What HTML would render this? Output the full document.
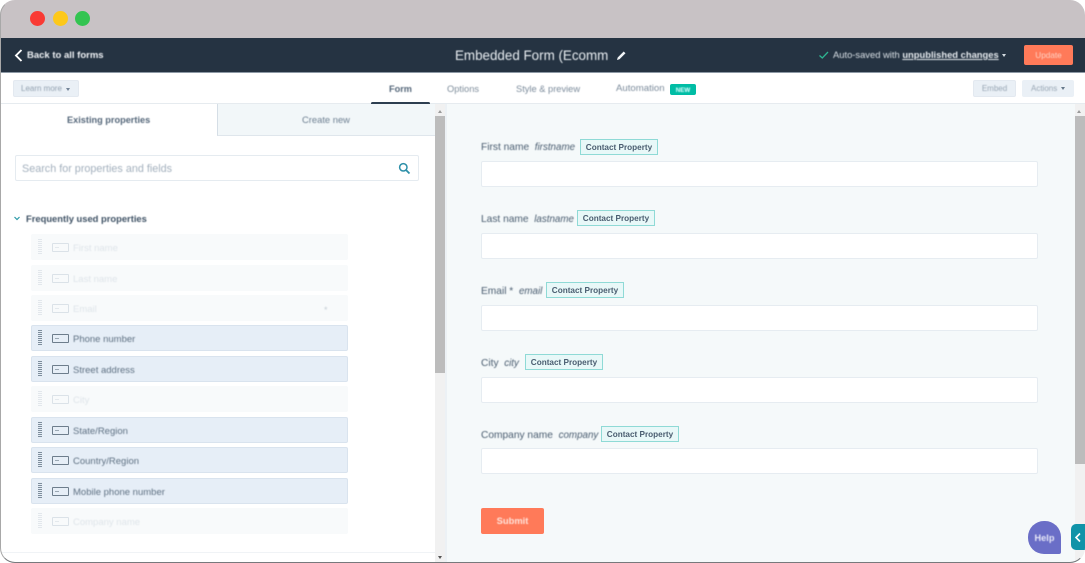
<!DOCTYPE html>
<html><head><meta charset="utf-8">
<style>
html,body{margin:0;padding:0;background:#fff}
body{width:1085px;height:563px;position:relative;overflow:hidden;font-family:"Liberation Sans",sans-serif;color:#33475b}
.a{position:absolute}
.t{position:absolute;white-space:nowrap;line-height:14px;height:14px;filter:blur(.4px)}
#win{position:absolute;left:0;top:0;width:1085px;height:563px;overflow:hidden;border-radius:15px}
.row{position:absolute;left:31px;width:317px;height:26px;background:#e6eef7;border:1px solid #d9e3ee;box-sizing:border-box;border-radius:2px}
.row.off{background:#f8fafb;border-color:#f8fafb}
.row i.g{position:absolute;left:6px;top:4px;width:4px;height:15px;background:repeating-linear-gradient(#7d8d9c 0 1px,transparent 1px 2px)}
.row.off i.g{background:repeating-linear-gradient(#e2e7ec 0 1px,transparent 1px 2px)}
.row i.b{position:absolute;left:20px;top:8px;width:15px;height:7px;border:1px solid #6d7d8c;border-radius:1px;box-sizing:content-box}
.row.off i.b{border-color:#dbe2e8}
.row i.b:after{content:"";position:absolute;left:2px;top:3px;width:4px;height:1px;background:#9aa7b3}
.row.off i.b:after{background:#e4e9ed}
.row span{position:absolute;left:41px;top:7px;font-size:9.5px;line-height:14px;color:#5e7082;white-space:nowrap;filter:blur(.4px)}
.row.off span{color:#dfe5ea}
.f{position:absolute;left:481px;width:557px;height:26px;background:#fff;border:1px solid #e6ecf1;box-sizing:border-box;border-radius:2px}
.tag{position:absolute;height:16px;background:#e8f8f8;border:1px solid #8fdad6;box-sizing:border-box;font-size:8.2px;font-weight:bold;color:#4a5d70;line-height:16px;text-align:center;white-space:nowrap}
.lb{font-size:10.2px;color:#4a5d70}
.lb em{font-style:italic;font-size:9.8px}
</style></head><body>
<div id="win">
<!-- title bar -->
<div class="a" style="left:0;top:0;width:1085px;height:38px;background:#c8c2c5"></div>
<div class="a" style="left:30px;top:11px;width:15px;height:15px;border-radius:50%;background:#f93a34"></div>
<div class="a" style="left:53px;top:11px;width:15px;height:15px;border-radius:50%;background:#fdc81a"></div>
<div class="a" style="left:75px;top:11px;width:15px;height:15px;border-radius:50%;background:#33c451"></div>
<!-- header -->
<div class="a" style="left:0;top:38px;width:1085px;height:34px;background:#253342"></div>
<div class="a" style="left:0;top:72px;width:1085px;height:1px;background:#8d99a5"></div>
<svg class="a" style="left:13px;top:48px" width="11" height="15" viewBox="0 0 11 15"><path d="M8.5 2 L3 7.5 L8.5 13" fill="none" stroke="#fff" stroke-width="1.9"/></svg>
<div class="t" style="left:27px;top:49px;font-size:9.5px;font-weight:bold;color:#f0f3f6">Back to all forms</div>
<div class="t" style="left:455px;top:49px;font-size:13.4px;color:#eaeff3">Embedded Form (Ecomm</div>
<svg class="a" style="left:616px;top:50px" width="11" height="11" viewBox="0 0 11 11"><path d="M1 10 L1.7 7.5 L7.7 1.5 L9.5 3.3 L3.5 9.3 Z" fill="#f2f5f7"/></svg>
<svg class="a" style="left:818px;top:50px" width="12" height="10" viewBox="0 0 12 10"><path d="M1.5 5.5 L4.3 8 L10 2" fill="none" stroke="#2db591" stroke-width="1.3"/></svg>
<div class="t" style="left:833px;top:48px;font-size:9.4px;color:#d9e0e6">Auto-saved with <b style="text-decoration:underline;color:#e6ebef">unpublished changes</b></div>
<div class="a" style="left:1002px;top:54px;width:0;height:0;border:2.5px solid transparent;border-top:3px solid #d5dce2"></div>
<div class="a" style="left:1024px;top:45px;width:49px;height:20px;background:#ff7a59;border-radius:2px"></div>
<div class="t" style="left:1024px;top:49px;width:49px;text-align:center;font-size:8.2px;color:#ffd2c4">Update</div>
<!-- subnav -->
<div class="a" style="left:0;top:73px;width:1085px;height:31px;background:#fff;border-bottom:1px solid #e6ebef;box-sizing:border-box"></div>
<div class="a" style="left:13px;top:80px;width:66px;height:17px;background:#eaf0f6;border:1px solid #e3e9f0;box-sizing:border-box;border-radius:2px"></div>
<div class="t" style="left:21px;top:82px;font-size:8px;color:#93a2b1">Learn more</div>
<div class="a" style="left:66px;top:88px;width:0;height:0;border:2px solid transparent;border-top:3px solid #738497"></div>
<div class="t" style="left:389px;top:82px;font-size:9.2px;font-weight:bold;color:#55677a">Form</div>
<div class="a" style="left:371px;top:102px;width:59px;height:3px;background:#2d3e50;border-radius:2px"></div>
<div class="t" style="left:447px;top:82px;font-size:9.3px;color:#7f8e9c">Options</div>
<div class="t" style="left:516px;top:82px;font-size:9.3px;color:#7b8b9b">Style &amp; preview</div>
<div class="t" style="left:616px;top:82px;font-size:9.6px;color:#7b8b9b">Automation</div>
<div class="a" style="left:670px;top:84px;width:26px;height:11px;background:#00bda5;border-radius:2px"></div>
<div class="t" style="left:670px;top:84px;width:26px;text-align:center;font-size:6.2px;font-weight:bold;color:#dff">NEW</div>
<div class="a" style="left:973px;top:80px;width:43px;height:17px;background:#eaf0f6;border:1px solid #e3e9f0;box-sizing:border-box;border-radius:2px"></div>
<div class="t" style="left:973px;top:82px;width:43px;text-align:center;font-size:8px;color:#98a6b4">Embed</div>
<div class="a" style="left:1022px;top:80px;width:52px;height:17px;background:#eaf0f6;border-radius:2px"></div>
<div class="t" style="left:1031px;top:82px;font-size:8px;color:#98a6b4">Actions</div>
<div class="a" style="left:1061px;top:87px;width:0;height:0;border:2px solid transparent;border-top:3px solid #66788a"></div>
<!-- left panel -->
<div class="a" style="left:0;top:104px;width:435px;height:459px;background:#fff"></div>
<div class="a" style="left:217px;top:104px;width:218px;height:32px;background:#f2f7f9;border-bottom:1px solid #dfe6ec;border-left:1px solid #d5dee6;box-sizing:border-box"></div>
<div class="t" style="left:67px;top:113px;font-size:9.2px;font-weight:bold;color:#55677a">Existing properties</div>
<div class="t" style="left:302px;top:113px;font-size:9.4px;color:#6d7f91">Create new</div>
<div class="a" style="left:15px;top:155px;width:404px;height:26px;background:#fff;border:1px solid #e5ebf0;box-sizing:border-box;border-radius:2px"></div>
<div class="t" style="left:22px;top:162px;font-size:10.8px;color:#a3b0bd">Search for properties and fields</div>
<svg class="a" style="left:398px;top:162px" width="13" height="13" viewBox="0 0 13 13"><circle cx="5.3" cy="5.3" r="3.7" fill="none" stroke="#2c8fa8" stroke-width="1.5"/><path d="M8 8 L11.5 11.5" stroke="#2c8fa8" stroke-width="1.8"/></svg>
<svg class="a" style="left:13px;top:215px" width="8" height="7" viewBox="0 0 8 7"><path d="M1.5 2 L4 4.5 L6.5 2" fill="none" stroke="#2c9aa8" stroke-width="1.2"/></svg>
<div class="t" style="left:26px;top:212px;font-size:9.4px;font-weight:bold;color:#3f5265">Frequently used properties</div>
<div class="row off" style="top:234px"><i class="g"></i><i class="b"></i><span>First name</span></div>
<div class="row off" style="top:265px"><i class="g"></i><i class="b"></i><span>Last name</span></div>
<div class="row off" style="top:295px"><i class="g"></i><i class="b"></i><span>Email</span></div>
<div class="t" style="left:324px;top:303px;font-size:9px;color:#c6ced6">*</div>
<div class="row" style="top:325px"><i class="g"></i><i class="b"></i><span>Phone number</span></div>
<div class="row" style="top:356px"><i class="g"></i><i class="b"></i><span>Street address</span></div>
<div class="row off" style="top:386px"><i class="g"></i><i class="b"></i><span>City</span></div>
<div class="row" style="top:417px"><i class="g"></i><i class="b"></i><span>State/Region</span></div>
<div class="row" style="top:447px"><i class="g"></i><i class="b"></i><span>Country/Region</span></div>
<div class="row" style="top:478px"><i class="g"></i><i class="b"></i><span>Mobile phone number</span></div>
<div class="row off" style="top:508px"><i class="g"></i><i class="b"></i><span>Company name</span></div>
<div class="a" style="left:0;top:552px;width:435px;height:1px;background:#f0f3f6"></div>
<!-- left scrollbar -->
<div class="a" style="left:435px;top:104px;width:10px;height:459px;background:#f1f1f1"></div>
<div class="a" style="left:435px;top:116px;width:10px;height:257px;background:#bcbcbc"></div>
<div class="a" style="left:438px;top:110px;width:0;height:0;border:2.5px solid transparent;border-bottom:3px solid #9a9a9a;border-top:0"></div>
<div class="a" style="left:438px;top:556px;width:0;height:0;border:2.5px solid transparent;border-top:3px solid #555;border-bottom:0"></div>
<!-- right panel -->
<div class="a" style="left:445px;top:104px;width:640px;height:459px;background:#f5f9fa;border-left:2px solid #ecf1f5;box-sizing:border-box"></div>

<div class="t lb" style="left:481px;top:141px">First name &nbsp;<em>firstname</em></div>
<div class="tag" style="left:580px;top:139px;width:78px">Contact Property</div>
<div class="f" style="top:161px"></div>

<div class="t lb" style="left:481px;top:213px">Last name &nbsp;<em>lastname</em></div>
<div class="tag" style="left:577px;top:210px;width:78px">Contact Property</div>
<div class="f" style="top:233px"></div>

<div class="t lb" style="left:481px;top:285px">Email * &nbsp;<em>email</em></div>
<div class="tag" style="left:546px;top:282px;width:78px">Contact Property</div>
<div class="f" style="top:305px"></div>

<div class="t lb" style="left:481px;top:357px">City &nbsp;<em>city</em></div>
<div class="tag" style="left:525px;top:354px;width:78px">Contact Property</div>
<div class="f" style="top:377px"></div>

<div class="t lb" style="left:481px;top:429px">Company name &nbsp;<em>company</em></div>
<div class="tag" style="left:601px;top:426px;width:78px">Contact Property</div>
<div class="f" style="top:448px"></div>

<div class="a" style="left:481px;top:508px;width:63px;height:26px;background:#ff7a59;border-radius:2px"></div>
<div class="t" style="left:481px;top:514px;width:63px;text-align:center;font-size:9.4px;font-weight:bold;color:#ffe3da">Submit</div>
<!-- right scrollbar -->
<div class="a" style="left:1075px;top:104px;width:10px;height:459px;background:#f1f1f1"></div>
<div class="a" style="left:1075px;top:116px;width:10px;height:348px;background:#bcbcbc"></div>
<div class="a" style="left:1077px;top:110px;width:0;height:0;border:2.5px solid transparent;border-bottom:3px solid #9a9a9a;border-top:0"></div>
<!-- help -->
<div class="a" style="left:1028px;top:521px;width:33px;height:33px;background:#6a6ec7;border-radius:16px 16px 2px 16px"></div>
<div class="t" style="left:1028px;top:531px;width:33px;text-align:center;font-size:9.2px;font-weight:bold;color:#e8e9f8">Help</div>
<div class="a" style="left:1071px;top:524px;width:14px;height:26px;background:#0f93a8;border-radius:5px 0 0 5px"></div>
<svg class="a" style="left:1074px;top:532px" width="8" height="11" viewBox="0 0 8 11"><path d="M6 1.5 L2 5.5 L6 9.5" fill="none" stroke="#fff" stroke-width="1.6"/></svg>
</div>
<!-- window outline -->
<div class="a" style="left:0;top:0;width:1085px;height:563px;box-sizing:border-box;border:1px solid #77797c;border-top-color:transparent;border-right-color:transparent;border-left-color:#a8a8a8;border-radius:15px;pointer-events:none"></div>
</body></html>
